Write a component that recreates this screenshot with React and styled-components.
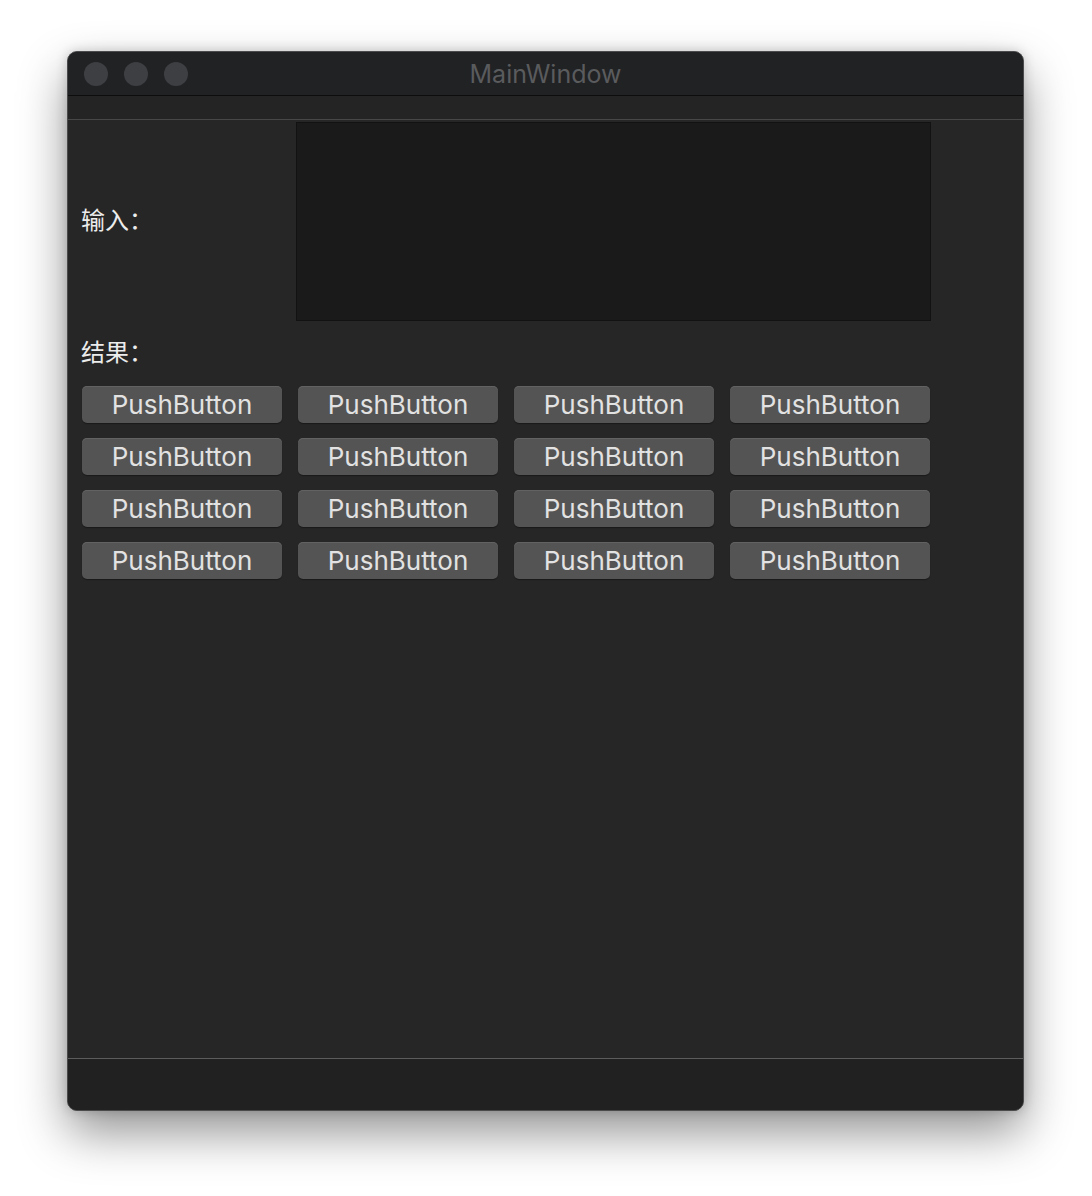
import React from "react";
import styled, { createGlobalStyle } from "styled-components";

const Global = createGlobalStyle`
  html, body { margin: 0; padding: 0; background: #ffffff; }
  body { font-family: "Inter", "Noto Sans CJK SC", sans-serif; }
`;

const Stage = styled.div`
  width: 1092px;
  height: 1196px;
  box-sizing: border-box;
  padding: 51px 0 0 67px;
  background: #ffffff;
`;

const Window = styled.div`
  width: 957px;
  height: 1060px;
  box-sizing: border-box;
  border: 1px solid #4b4b4d;
  border-radius: 10px;
  overflow: hidden;
  display: flex;
  flex-direction: column;
  box-shadow: 0 22px 48px rgba(0, 0, 0, 0.42), 0 0 12px rgba(0, 0, 0, 0.18);
  background: #262626;
`;

const TitleBar = styled.div`
  height: 43px;
  flex: none;
  background: #212224;
  border-bottom: 1px solid #0d0d0d;
  display: flex;
  align-items: center;
  position: relative;
  padding-left: 16px;
  gap: 16px;
`;

const Light = styled.span`
  width: 24px;
  height: 24px;
  border-radius: 50%;
  background: #3e3f42;
`;

const Title = styled.div`
  position: absolute;
  left: 0;
  right: 0;
  top: 0;
  bottom: 0;
  display: flex;
  align-items: center;
  justify-content: center;
  font-family: "Inter", sans-serif;
  font-size: 25px;
  color: #5a5b5d;
  pointer-events: none;
`;

const MenuBar = styled.div`
  height: 23px;
  flex: none;
  background: #242424;
  border-bottom: 1px solid #474747;
`;

const Central = styled.div`
  flex: 1;
  background: #262626;
  padding: 2px 13px 0 13px;
  display: flex;
  flex-direction: column;
`;

const FormRow = styled.div`
  display: flex;
  align-items: center;
`;

const Label = styled.div`
  font-family: "Noto Sans CJK SC", sans-serif;
  font-size: 24px;
  color: #ececec;
  width: ${(p) => p.$w || "auto"};
  line-height: 30px;
  padding-bottom: ${(p) => p.$lift || "0px"};
`;

const Input = styled.div`
  width: 635px;
  height: 199px;
  box-sizing: border-box;
  background: #1a1a1a;
  border: 1px solid #121212;
`;

const ResultLabel = styled(Label)`
  margin-top: 15px;
`;

const Grid = styled.div`
  margin-top: 20px;
  margin-left: 1px;
  display: grid;
  grid-template-columns: repeat(4, 200px);
  column-gap: 16px;
  row-gap: 15px;
`;

const Button = styled.button`
  height: 37px;
  box-sizing: border-box;
  border: none;
  border-radius: 5px;
  background: #545454;
  box-shadow: inset 0 1px 0 #626262, 0 1px 1px rgba(0, 0, 0, 0.35);
  color: #e2e2e2;
  font-family: "Inter", sans-serif;
  font-size: 26px;
  font-weight: 400;
  padding: 0;
  display: flex;
  align-items: center;
  justify-content: center;
`;

const StatusBar = styled.div`
  height: 51px;
  flex: none;
  background: #212121;
  border-top: 1px solid #5c5c5c;
`;

export default function App() {
  const buttons = Array.from({ length: 16 }, (_, i) => i);
  return (
    <>
      <Global />
      <Stage>
        <Window>
          <TitleBar>
            <Light />
            <Light />
            <Light />
            <Title>MainWindow</Title>
          </TitleBar>
          <MenuBar />
          <Central>
            <FormRow>
              <Label $w="215px" $lift="6px">输入：</Label>
              <Input />
            </FormRow>
            <ResultLabel>结果：</ResultLabel>
            <Grid>
              {buttons.map((i) => (
                <Button key={i}>PushButton</Button>
              ))}
            </Grid>
          </Central>
          <StatusBar />
        </Window>
      </Stage>
    </>
  );
}
